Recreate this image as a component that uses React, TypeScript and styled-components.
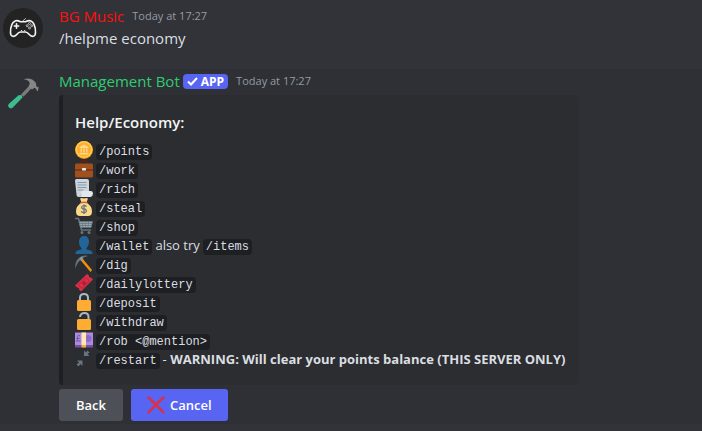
import React from "react";
import styled, { createGlobalStyle } from "styled-components";

const GlobalStyle = createGlobalStyle`
  * { box-sizing: border-box; }
  html { background: #313338; }
  body {
    margin: 0;
    color: #dbdee1;
    font-family: "Open Sans", "Noto Sans", sans-serif;
    font-size: 15px;
    overflow-x: hidden;
  }
`;

const Chat = styled.main`
  display: flex;
  flex-direction: column;
`;

const Message = styled.article<{ $active?: boolean }>`
  display: grid;
  grid-template-columns: 40px minmax(0, 1fr);
  column-gap: 16px;
  padding: ${(p) => (p.$active ? "1px 16px 3px 3px" : "5px 16px 20px 3px")};
  background: ${(p) => (p.$active ? "#2e3035" : "transparent")};
`;

const Avatar = styled.div`
  width: 40px;
  height: 40px;
  margin-top: 3px;
  svg { display: block; width: 100%; height: 100%; }
`;

const Header = styled.header`
  display: flex;
  align-items: center;
  height: 22px;
`;

const Author = styled.span<{ $color: string }>`
  color: ${(p) => p.$color};
  font-size: 15px;
  font-weight: 500;
  line-height: 22px;
`;

const AppTag = styled.span`
  display: flex;
  align-items: center;
  gap: 3px;
  height: 15px;
  margin-left: 3px;
  padding: 0 4px;
  border-radius: 4px;
  background: #5865f2;
  color: #fff;
  font-size: 12px;
  font-weight: 700;
  line-height: 15px;
`;

const Time = styled.time`
  margin-left: 8px;
  color: #949ba4;
  font-size: 11px;
  font-weight: 500;
  line-height: 22px;
`;

const Text = styled.p`
  margin: 0;
  line-height: 22px;
`;

const Embed = styled.section`
  width: fit-content;
  max-width: 520px;
  margin-top: 3px;
  padding: 16px 16px 16px 12px;
  border-left: 4px solid #1e1f22;
  border-radius: 4px;
  background: #2b2d31;
`;

const Title = styled.h2`
  margin: 0 0 8px;
  color: #f2f3f5;
  font-size: 15px;
  font-weight: 600;
  line-height: 22px;
`;

const CommandList = styled.ul`
  margin: 0;
  padding: 0;
  list-style: none;
`;

const Command = styled.li`
  display: flex;
  align-items: center;
  gap: 3px;
  height: 19px;
  font-size: 13px;
  line-height: 19px;
  white-space: nowrap;
  > svg { flex: none; align-self: flex-start; width: 18px; height: 18px; }
`;

const Code = styled.code`
  height: 16px;
  margin-top: 2px;
  padding: 1px 3px 0;
  border-radius: 4px;
  background: #1e1f22;
  font-family: "Liberation Mono", monospace;
  font-size: 12px;
  line-height: 15px;
`;

const Actions = styled.div`
  display: flex;
  gap: 8px;
  margin-top: 4px;
`;

const Button = styled.button<{ $primary?: boolean }>`
  display: flex;
  align-items: center;
  justify-content: center;
  gap: 5px;
  min-width: 64px;
  height: 32px;
  padding: 0 16px;
  border: 0;
  border-radius: 3px;
  background: ${(p) => (p.$primary ? "#5865f2" : "#4e5058")};
  color: #fff;
  font-family: inherit;
  font-size: 13px;
  font-weight: 600;
  svg { width: 18px; height: 18px; }
`;

const GamepadAvatar = () => (
  <svg viewBox="0 0 40 40" aria-hidden="true">
    <circle cx="20" cy="20" r="20" fill="#232323" />
    <g fill="none" stroke="#f4f4f4" strokeWidth="1.6" strokeLinecap="round" strokeLinejoin="round">
      <path d="M12 13c2-1 4 0 5.500.800h5c1.500-.800 3.500-1.800 5.500-.800 3.200 1.500 4.500 7 4.500 11.500 0 4.500-4 5-6.500 1.700-1-1.300-1.700-2.200-3.500-2.200h-5c-1.800 0-2.500.900-3.500 2.200-2.500 3.300-6.500 2.800-6.500-1.700C7.500 20 8.800 14.500 12 13z" />
      <path d="M13.500 15.800v4.400M11.300 18h4.400" />
      <path d="M20 13c0-1.500 2-1 2.500-2.300" strokeWidth="0.800" />
    </g>
    <g fill="none" stroke="#ddd" strokeWidth="0.800">
      <circle cx="26.500" cy="15.500" r="1" /><circle cx="26.500" cy="20" r="1" />
      <circle cx="24.200" cy="17.700" r="1" /><circle cx="28.800" cy="17.700" r="1" />
    </g>
    <path d="M18 22.500h1.200M21 22.500h1.200" stroke="#ccc" />
  </svg>
);

const HammerAvatar = () => (
  <svg viewBox="0 0 40 40" aria-hidden="true">
    <path d="M18 21.500l9-9.500 2.500 2.200-9 9.500z" fill="#7b7b7b" />
    <path d="M20.500 6.300c5-1.800 9.500-.300 12.300 3.500l.500 3.200 1 1.200 1.500-.100-1.100 4.300-1-.800-.500-1.600-1.800-1.200-2.400 1.700-3.400-3.300 1.100-2.200c.2-2.500-2.200-4.200-6.200-4.700z" fill="#868686" />
    <path d="M18.600 22l.900 2.500L9.800 34.400c-1.200 1.200-2.500 1.200-3.800 0s-1.200-2.500 0-3.700l9.500-8.500z" fill="#3dbc8e" />
  </svg>
);

const Svg = ({ children }: { children: React.ReactNode }) => (
  <svg viewBox="0 0 36 36" aria-hidden="true">{children}</svg>
);

const Coin = () => (
  <Svg>
    <circle cx="18" cy="18" r="18" fill="#f4900c" />
    <circle cx="18" cy="17" r="17" fill="#ffcc4d" />
    <circle cx="18" cy="17" r="14" fill="#ffac33" />
    <path d="M18 7l-9 5v2h18v-2zM11 15h3v8h-3zM16.500 15h3v8h-3zM22 15h3v8h-3zM9 24h18v3H9z" fill="#ffd983" />
  </Svg>
);
const Briefcase = () => (
  <Svg>
    <path d="M11 9V4q0-3 3-3h8q3 0 3 3v5h-3V4h-8v5z" fill="#662113" />
    <rect y="7" width="36" height="28" rx="3" fill="#a0501d" />
    <path d="M0 19h36v2H0z" fill="#662113" />
    <rect x="14" y="16" width="8" height="5" rx="1" fill="#dceaf1" />
  </Svg>
);
const Scroll = () => (
  <Svg>
    <path d="M0 3q0-3 3-3h21q4 0 4 4v26q0 6-5 6H8q-5 0-5-5z" fill="#ccd6dd" />
    <path d="M12 28q0-4 4-4h16q4 0 4 5t-5 7H9q4-2 3-8z" fill="#e1e8ed" />
    <path d="M5 7h18M5 12h18M5 17h18M5 22h12" stroke="#8899a6" strokeWidth="2" />
    <path d="M12 29q2 6-3 7" fill="none" stroke="#99aab5" />
  </Svg>
);
const MoneyBag = () => (
  <Svg>
    <path d="M10 1q4-2 8 0 4-2 8 0l-3 8q11 7 11 18 0 9-8 9H10q-8 0-8-9Q2 16 13 9z" fill="#fdd888" />
    <path d="M11 8q7-2 14 0v3q-7-2-14 0z" fill="#bf6952" />
    <path d="M23 17q-3-3-7-1.500c-5 2-3 6 2 6.500s7 5 2 7q-4 1-8-2M18 13v19" fill="none" stroke="#67757f" strokeWidth="2.600" />
  </Svg>
);
const Cart = () => (
  <Svg>
    <path d="M1 3h6l6 23h18" fill="none" stroke="#66757f" strokeWidth="3" strokeLinecap="round" />
    <path d="M8 9h27l-3 12H11z" fill="#99aab5" stroke="#66757f" strokeWidth="1.500" />
    <path d="M14 9l2 12M20 9l1 12M27 9l-1 12M9 13h25M10 17h23" stroke="#66757f" strokeWidth="1.500" />
    <circle cx="14" cy="31" r="3" fill="#66757f" /><circle cx="28" cy="31" r="3" fill="#66757f" />
  </Svg>
);
const Person = () => (
  <Svg>
    <path d="M13 22h10v5q12 1 12 7v2H1v-2q0-6 12-7z" fill="#226699" />
    <path d="M18 0c6 0 10 4 10 11S24 26 18 26 8 19 8 12 12 0 18 0z" fill="#226699" />
  </Svg>
);
const Pickaxe = () => (
  <Svg>
    <path d="M10 9l4-3 20 24-3 4z" fill="#f4900c" />
    <path d="M1 27Q-1 13 8 6 16-1 27 2 17 3 12 9 4 15 1 27z" fill="#66757f" />
    <path d="M9 6l4-3 4 5-5 4z" fill="#8899a6" />
  </Svg>
);
const Ticket = () => (
  <Svg>
    <path d="M24 0l4 3q-1 4 4 4l4 4-24 24-4-4q1-4-4-4l-4-4z" fill="#dd2e44" />
    <path d="M22 7l7 7-15 15-7-7z" fill="none" stroke="#a0203b" strokeWidth="1.500" />
    <path d="M18 12l1.500 4 4-.500-2.500 3 2 3.500-4-1-3 3v-4l-4-2 4-1z" fill="#a0203b" />
  </Svg>
);
const Lock = ({ open = false }: { open?: boolean }) => (
  <Svg>
    <path d={open ? "M10 10q1-8 9-8 8 0 8 8v8" : "M10 17v-7q0-8 8-8t8 8v7"} fill="none" stroke="#aab8c2" strokeWidth="4" />
    <rect x="4" y="14" width="28" height="22" rx="3" fill="#ffac33" />
  </Svg>
);
const Banknote = () => (
  <Svg>
    <path d="M0 3h36v27H0z" fill="#aa8dd8" />
    <path d="M0 28h36v5H0z" fill="#744eaa" />
    <circle cx="26" cy="15" r="7" fill="#9268ca" />
    <path d="M10 10q-4-3-5 1v6q0 3-2 3h8M3 15h6" fill="none" stroke="#744eaa" strokeWidth="2" />
    <path d="M13 3h9v25h-9z" fill="#ffe8b6" /><path d="M13 28h9v5h-9z" fill="#ffac33" />
  </Svg>
);
const Collapse = () => (
  <Svg>
    <path d="M18 12V1l4 4 3-4 4 4-4 3 4 4zM4 21h11v11l-4-4-4 5-4-4 5-4z" fill="#66757f" />
  </Svg>
);
const Cross = () => (
  <Svg><path d="M3 3q14 13 30 30M33 3Q19 15 3 33" fill="none" stroke="#dd2e44" strokeWidth="5" strokeLinecap="round" /></Svg>
);
const Check = () => (
  <svg width="11" height="9" viewBox="0 0 11 9" aria-hidden="true">
    <path d="M1 4.500l3 3L10 1" fill="none" stroke="#fff" strokeWidth="2" />
  </svg>
);

const commands: { icon: React.ReactNode; code: string; rest?: React.ReactNode }[] = [
  { icon: <Coin />, code: "/points" },
  { icon: <Briefcase />, code: "/work" },
  { icon: <Scroll />, code: "/rich" },
  { icon: <MoneyBag />, code: "/steal" },
  { icon: <Cart />, code: "/shop" },
  { icon: <Person />, code: "/wallet", rest: <><span>also try</span><Code>/items</Code></> },
  { icon: <Pickaxe />, code: "/dig" },
  { icon: <Ticket />, code: "/dailylottery" },
  { icon: <Lock />, code: "/deposit" },
  { icon: <Lock open />, code: "/withdraw" },
  { icon: <Banknote />, code: "/rob <@mention>" },
  {
    icon: <Collapse />,
    code: "/restart",
    rest: <span>- <strong>WARNING: Will clear your points balance (THIS SERVER ONLY)</strong></span>,
  },
];

export default function App() {
  return (
    <>
      <GlobalStyle />
      <Chat>
        <Message>
          <Avatar><GamepadAvatar /></Avatar>
          <div>
            <Header>
              <Author $color="#ff0e0e">BG Music</Author>
              <Time>Today at 17:27</Time>
            </Header>
            <Text>/helpme economy</Text>
          </div>
        </Message>
        <Message $active>
          <Avatar><HammerAvatar /></Avatar>
          <div>
            <Header>
              <Author $color="#2ecc71">Management Bot</Author>
              <AppTag><Check />APP</AppTag>
              <Time>Today at 17:27</Time>
            </Header>
            <Embed>
              <Title>Help/Economy:</Title>
              <CommandList>
                {commands.map((c) => (
                  <Command key={c.code}>
                    {c.icon}
                    <Code>{c.code}</Code>
                    {c.rest}
                  </Command>
                ))}
              </CommandList>
            </Embed>
            <Actions>
              <Button type="button">Back</Button>
              <Button type="button" $primary><Cross />Cancel</Button>
            </Actions>
          </div>
        </Message>
      </Chat>
    </>
  );
}
